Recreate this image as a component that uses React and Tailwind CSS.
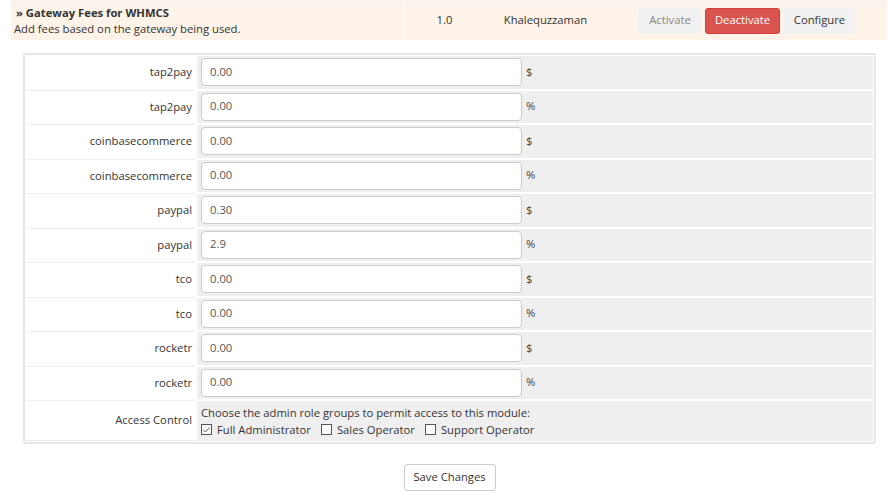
import { Check } from "lucide-react";

const fields = [
  { label: "tap2pay", value: "0.00", unit: "$" },
  { label: "tap2pay", value: "0.00", unit: "%" },
  { label: "coinbasecommerce", value: "0.00", unit: "$" },
  { label: "coinbasecommerce", value: "0.00", unit: "%" },
  { label: "paypal", value: "0.30", unit: "$" },
  { label: "paypal", value: "2.9", unit: "%" },
  { label: "tco", value: "0.00", unit: "$" },
  { label: "tco", value: "0.00", unit: "%" },
  { label: "rocketr", value: "0.00", unit: "$" },
  { label: "rocketr", value: "0.00", unit: "%" },
];

const roles = [
  { name: "Full Administrator", checked: true },
  { name: "Sales Operator", checked: false },
  { name: "Support Operator", checked: false },
];

function Box({ checked }) {
  return (
    <span className="w-[11px] h-[11px] border border-[#555] bg-white flex items-center justify-center">
      {checked && <Check className="w-[10px] h-[10px] text-[#444]" strokeWidth={2.5} />}
    </span>
  );
}

export default function App() {
  return (
    <div
      className="w-[892px] h-[493px] bg-white text-[11.25px] text-[#333] overflow-hidden"
      style={{ fontFamily: '"Open Sans", "Liberation Sans", sans-serif' }}
    >
      {/* module row */}
      <div className="ml-[11px] w-[876px] h-[40px] flex bg-[#fdf3e8] border-t border-[#f2f2f2]">
        <div className="w-[392px] pl-[3px] pt-[4px] leading-[16px]">
          <p className="font-bold pl-[2px]">» Gateway Fees for WHMCS</p>
          <p>Add fees based on the gateway being used.</p>
        </div>
        <div className="w-[82px] border-l border-white flex items-center justify-center">1.0</div>
        <div className="w-[120px] border-l border-white flex items-center justify-center">Khalequzzaman</div>
        <div className="flex-1 border-l border-white flex items-center pl-[32px] gap-[3px]">
          <span className="h-[26px] w-[64px] flex items-center justify-center rounded-[3px] bg-[#f1f1f1] text-[#888]">Activate</span>
          <span className="h-[26px] w-[75px] flex items-center justify-center rounded-[3px] bg-[#d9534f] border border-[#d43f3a] text-white">Deactivate</span>
          <span className="h-[26px] w-[71px] flex items-center justify-center rounded-[3px] bg-[#f1f1f1] text-[#333] ml-[1px]">Configure</span>
        </div>
      </div>

      {/* settings panel */}
      <div className="ml-[23px] mt-[13px] w-[853px] border-2 border-[#e3e7ea] rounded-[2px] bg-white p-[1px]">
        {fields.map((f, i) => (
          <div key={i} className="flex h-[34.5px]">
            <div className="w-[170px] border-b border-[#eeeeee] flex items-center justify-end pr-[4px]">{f.label}</div>
            <div className="flex-1 bg-[#efefef] border-b-2 border-white ml-[1px] flex items-center pl-[4px]">
              <div className="w-[321px] h-[28px] bg-white border border-[#cccccc] rounded-[4px] flex items-center pl-[8px] text-[#555]">
                {f.value}
              </div>
              <span className="ml-[4px] text-[#444]">{f.unit}</span>
            </div>
          </div>
        ))}
        <div className="flex h-[40px]">
          <div className="w-[170px] border-b border-[#eeeeee] flex items-center justify-end pr-[4px]">Access Control</div>
          <div className="flex-1 bg-[#efefef] ml-[1px] pl-[4px] pt-[3px] leading-[17px]">
            <p>Choose the admin role groups to permit access to this module:</p>
            <div className="flex items-center">
              {roles.map((r) => (
                <span key={r.name} className="flex items-center gap-[5px] mr-[10px]">
                  <Box checked={r.checked} />
                  {r.name}
                </span>
              ))}
            </div>
          </div>
        </div>
      </div>

      <div className="ml-[23px] w-[853px] flex justify-center mt-[20px]">
        <span className="h-[27px] w-[92px] flex items-center justify-center bg-white border border-[#cccccc] rounded-[3px] text-[#333]">
          Save Changes
        </span>
      </div>
    </div>
  );
}
